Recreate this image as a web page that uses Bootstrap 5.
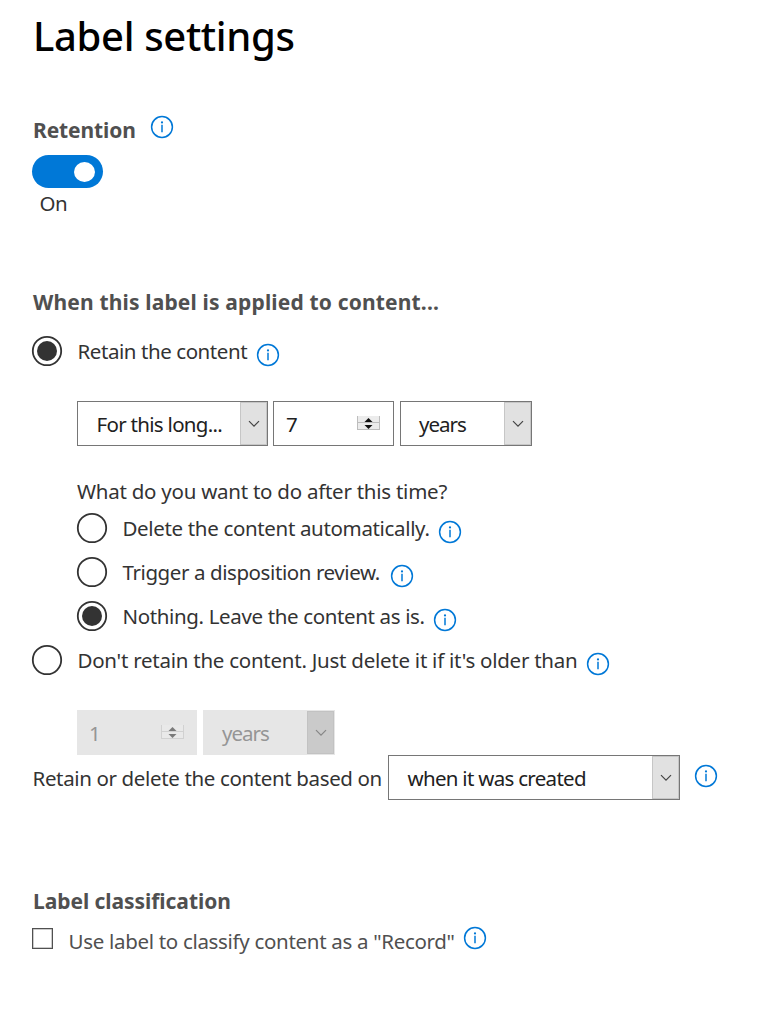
<!DOCTYPE html>
<html lang="en">
<head>
<meta charset="utf-8">
<meta name="viewport" content="width=device-width, initial-scale=1">
<title>Label settings</title>
<link href="https://cdn.jsdelivr.net/npm/bootstrap@5.3.0/dist/css/bootstrap.min.css" rel="stylesheet">
<style>
body{font-family:"Noto Sans","Open Sans",sans-serif;font-size:20.5px;line-height:44px;color:#333;background:#fff;white-space:nowrap;overflow:hidden}
.page{padding:14px 0 0 32px;width:782px;height:1036px}
h1{font-size:40px;line-height:44px;height:44px;font-weight:500;color:#000;margin:0 0 0 1px;letter-spacing:-.34px}
h2{font-size:21px;line-height:30px;font-weight:700;color:#505050;margin:0;padding-left:1px}
.line{height:44px}
.tip{width:24px;height:24px;flex:none}
.drop{margin-top:8px}
.dial{width:32px;height:32px;flex:none;margin:0 14.2px 0 -.7px}
.indent{margin-left:45px}
.gap-top{margin-top:28px}
.retention{margin-top:55px}
.retention-head{height:42px}
.retention-head .tip{margin-top:2px}
.state{line-height:30px;padding-left:7.5px;letter-spacing:-.4px}
.applied{margin-top:69px}
.classify{margin-top:86px}
.toggle-track{width:71px;height:33px;border-radius:17px;background:#0078d7;padding-right:8px}
.toggle-knob{width:21px;height:20px;border-radius:50%;background:#fff}
.field{height:45px;border:1px solid #767676;background:#fff;color:#212121;font-size:20.5px;line-height:45px;letter-spacing:-.7px}
.field .arrow{width:27px;height:43px;background:#e1e1e1;border:1px solid #c6c6c6;flex:none}
.field.off{background:#e6e6e6;border-color:#e6e6e6;color:#959595}
.field.off .arrow{background:#cacaca;border-color:#c2c2c2}
.off svg{opacity:.5}
.f-long{width:191px;padding-left:18.5px}
.f-num{width:121px;padding:0 13px 0 12px}
.off.f-num{width:120px;padding:0 12px 0 11px}
.f-unit{width:132px;padding-left:18px}
.f-unit span:first-child{letter-spacing:-1px}
.f-when{width:292px;padding-left:18.5px}
.num{line-height:24px;padding-top:1px}
.check{width:21px;height:21px;border:1.5px solid #505050;box-shadow:inset 0 0 0 .5px #999;margin-right:15.5px}
.t-ret{width:118px;margin-top:2px;letter-spacing:-.12px}
.t-when{letter-spacing:.16px}
.t-class{letter-spacing:-.05px}
.t-retain{width:178.6px;letter-spacing:-.43px}
.t-what{line-height:30px;letter-spacing:-.25px}
.t-del{width:315.6px;letter-spacing:-.34px}
.t-trig{width:267.6px;letter-spacing:-.41px}
.t-not{width:310.6px;letter-spacing:-.36px}
.t-dont{width:508.6px;letter-spacing:-.25px}
.t-based{width:356px;padding-left:.5px;letter-spacing:-.36px}
.t-rec{width:394px;color:#505050;margin-top:5px;letter-spacing:-.31px}
</style>
</head>
<body>
<svg class="d-none" xmlns="http://www.w3.org/2000/svg">
<symbol id="info" viewBox="0 0 24 24"><circle cx="12" cy="12" r="10.4" fill="none" stroke="#0078d7" stroke-width="1.5"/><path d="M12 9.8v7.4" stroke="#0078d7" stroke-width="1.5"/><circle cx="12" cy="7.4" r="1.1" fill="#0078d7"/></symbol>
<symbol id="radio" viewBox="0 0 32 32"><circle cx="16" cy="16" r="14.2" fill="#fff" stroke="#333" stroke-width="1.8"/></symbol>
<symbol id="radio-on" viewBox="0 0 32 32"><circle cx="16" cy="16" r="14.2" fill="#fff" stroke="#333" stroke-width="1.8"/><circle cx="16" cy="16" r="10" fill="#333"/></symbol>
<symbol id="chev" viewBox="0 0 12 8"><path d="M1 1.2l5 5 5-5" fill="none" stroke="#444" stroke-width="1.2"/></symbol>
<symbol id="spin" viewBox="0 0 23 15"><path fill="#ececec" d="M0 0h23v14H0z"/><path d="M.5 0v14M22.5 0v14M0 6.5h23M0 13.5h23" stroke="#bdbdbd" fill="none"/><path d="M7.5 6l4-4 4 4zM7.5 9l4 4 4-4z" fill="#111"/></symbol>
</svg>
<main class="page">
  <h1>Label settings</h1>
  <section class="retention">
    <div class="retention-head d-flex">
      <h2 class="t-ret">Retention</h2><svg class="tip"><use href="#info"/></svg>
    </div>
    <div class="toggle-track d-flex align-items-center justify-content-end"><span class="toggle-knob"></span></div>
    <div class="state">On</div>
  </section>
  <section class="applied">
    <h2 class="t-when">When this label is applied to content...</h2>
    <div class="d-flex align-items-center line" style="margin-top:12px"><svg class="dial"><use href="#radio-on"/></svg><span class="t-retain">Retain the content</span><svg class="tip drop"><use href="#info"/></svg></div>
    <div class="indent gap-top d-flex">
      <div class="field f-long d-flex justify-content-between"><span>For this long...</span><span class="arrow d-flex align-items-center justify-content-center"><svg width="12" height="8"><use href="#chev"/></svg></span></div>
      <div class="field f-num d-flex justify-content-between align-items-center" style="margin:0 6px 0 5px"><span class="num">7</span><svg width="23" height="15"><use href="#spin"/></svg></div>
      <div class="field f-unit d-flex justify-content-between"><span>years</span><span class="arrow d-flex align-items-center justify-content-center"><svg width="12" height="8"><use href="#chev"/></svg></span></div>
    </div>
    <div class="indent" style="margin-top:30px">
      <div class="t-what">What do you want to do after this time?</div>
      <div class="d-flex align-items-center line"><svg class="dial"><use href="#radio"/></svg><span class="t-del">Delete the content automatically.</span><svg class="tip drop"><use href="#info"/></svg></div>
      <div class="d-flex align-items-center line"><svg class="dial"><use href="#radio"/></svg><span class="t-trig">Trigger a disposition review.</span><svg class="tip drop"><use href="#info"/></svg></div>
      <div class="d-flex align-items-center line"><svg class="dial"><use href="#radio-on"/></svg><span class="t-not">Nothing. Leave the content as is.</span><svg class="tip drop"><use href="#info"/></svg></div>
    </div>
    <div class="d-flex align-items-center line"><svg class="dial"><use href="#radio"/></svg><span class="t-dont">Don't retain the content. Just delete it if it's older than</span><svg class="tip drop"><use href="#info"/></svg></div>
    <div class="indent gap-top d-flex">
      <div class="field off f-num d-flex justify-content-between align-items-center" style="margin-right:6px"><span class="num">1</span><svg width="23" height="15"><use href="#spin"/></svg></div>
      <div class="field off f-unit d-flex justify-content-between"><span>years</span><span class="arrow d-flex align-items-center justify-content-center"><svg width="12" height="8"><use href="#chev"/></svg></span></div>
    </div>
    <div class="d-flex align-items-center" style="height:45px"><span class="t-based">Retain or delete the content based on</span>
      <div class="field f-when d-flex justify-content-between"><span>when it was created</span><span class="arrow d-flex align-items-center justify-content-center"><svg width="12" height="8"><use href="#chev"/></svg></span></div>
      <svg class="tip" style="margin:0 0 4px 14px"><use href="#info"/></svg>
    </div>
  </section>
  <section class="classify">
    <h2 class="t-class">Label classification</h2>
    <div class="d-flex align-items-center line"><span class="check"></span><span class="t-rec">Use label to classify content as a "Record"</span><svg class="tip"><use href="#info"/></svg></div>
  </section>
</main>
<script src="https://cdn.jsdelivr.net/npm/bootstrap@5.3.0/dist/js/bootstrap.bundle.min.js"></script>
</body>
</html>
